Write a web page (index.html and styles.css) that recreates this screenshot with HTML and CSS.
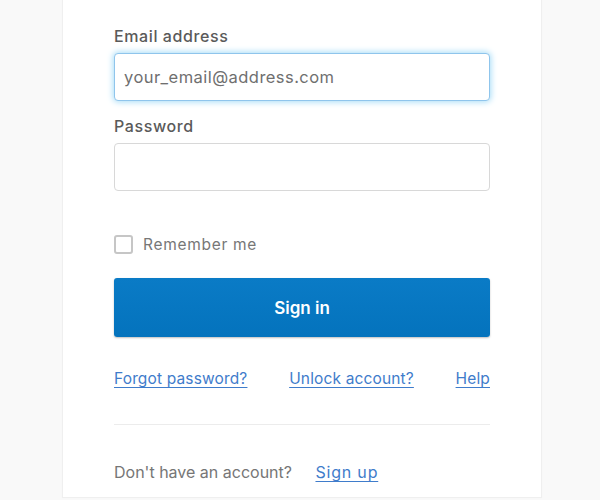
FILE: index.html
```html
<!DOCTYPE html>
<html lang="en">
<head>
  <meta charset="UTF-8">
  <title>Sign in</title>
  <link rel="stylesheet" href="styles.css">
</head>
<body>
<div class="card">
  <form class="form">
    <label class="label" for="email">Email address</label>
    <input class="input input-focus" id="email" type="text" placeholder="your_email@address.com">

    <label class="label label-pw" for="pw">Password</label>
    <input class="input" id="pw" type="password">

    <div class="remember">
      <span class="check"></span>
      <span>Remember me</span>
    </div>

    <button class="btn" type="button">Sign in</button>

    <div class="links">
      <a href="#">Forgot password?</a>
      <a href="#">Unlock account?</a>
      <a href="#">Help</a>
    </div>
  </form>

  <div class="signup">
    <span>Don't have an account?</span>
    <a href="#">Sign up</a>
  </div>
</div>
</body>
</html>
```

FILE: styles.css
```css
html, body {
  height: 100%;
}
* {
  margin: 0;
  padding: 0;
  box-sizing: border-box;
}
body {
  background-color: #f9f9f9;
  font-family: Inter, "Noto Sans", sans-serif;
  color: #5d5d5d;
  overflow: hidden;
  padding-left: 4px;
}

.card {
  width: 478px;
  height: 497px;
  margin: 0 auto;
  background-color: #fff;
  box-shadow: 0 0 1px 1px #efefef;
  padding: 26px 51px 0;
}

.form {
  display: flex;
  flex-direction: column;
  padding-bottom: 35px;
  border-bottom: 1px solid #ececec;
}

.label {
  font-size: 16px;
  line-height: 20px;
  font-weight: 500;
  letter-spacing: 0.6px;
  color: #5a5a5a;
  margin-bottom: 7px;
}
.label-pw {
  margin-top: 15px;
}

.input {
  height: 48px;
  border: 1px solid #d8d8d8;
  border-radius: 4px;
  padding: 0 9px;
  font-family: inherit;
  font-size: 16.5px;
  letter-spacing: 0.45px;
  color: #5d5d5d;
  outline: none;
}
.input::placeholder {
  color: #6f6f6f;
}
.input-focus {
  border-color: #8fc5ec;
  box-shadow: 0 0 6px 1px #a6dcf7;
}

.remember {
  display: flex;
  align-items: center;
  gap: 10px;
  margin-top: 44px;
  font-size: 15.5px;
  letter-spacing: 0.7px;
  color: #777;
}
.check {
  width: 19px;
  height: 19px;
  border: 2px solid #c6c6c6;
  border-radius: 3px;
}

.btn {
  margin-top: 24px;
  height: 59px;
  border: none;
  border-radius: 3px;
  background: linear-gradient(#0a7bc6, #0473bd);
  box-shadow: 0 1px 2px rgba(0,0,0,0.25);
  color: #fff;
  font-family: inherit;
  font-size: 17px;
  font-weight: 600;
}

.links {
  display: flex;
  justify-content: space-between;
  margin-top: 32px;
  font-size: 15.5px;
  line-height: 20px;
  letter-spacing: 0.15px;
}
.links a,
.signup a {
  color: #3f7ccb;
  text-decoration: underline;
  text-underline-offset: 3px;
}

.signup {
  margin-top: 37px;
  font-size: 16px;
  line-height: 20px;
  color: #767676;
}
.signup a {
  margin-left: 19px;
  letter-spacing: 0.8px;
}
```
